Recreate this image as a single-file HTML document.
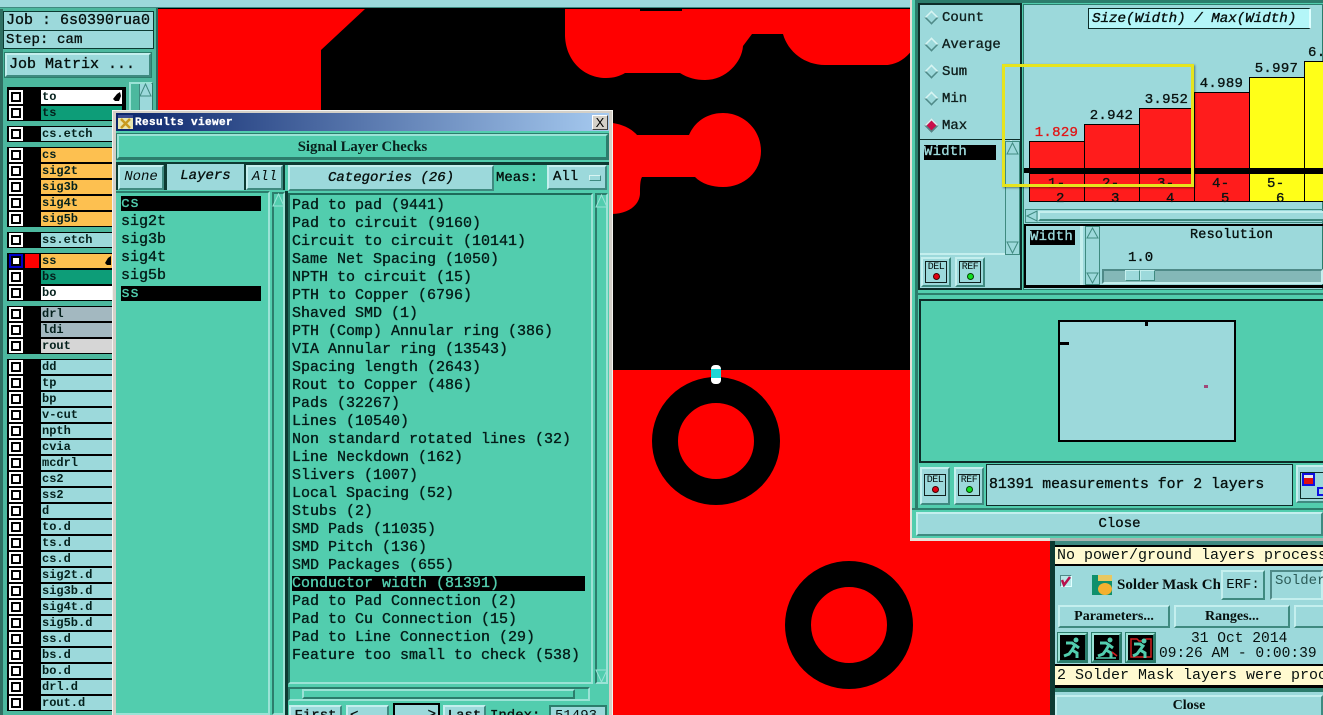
<!DOCTYPE html>
<html><head><meta charset="utf-8"><title>Results viewer</title>
<style>
html,body{margin:0;padding:0;background:#000;}
#r{position:relative;width:1323px;height:715px;overflow:hidden;background:#000;font-family:"Liberation Mono",monospace;color:#06100e;}
#r div{position:absolute;box-sizing:border-box;white-space:pre;-webkit-text-stroke:.35px currentColor;}
.c{background:#9cd9db;}
.t{background:#52cdae;}
.b{background:#9cd9db;border:2px solid;border-color:#c4efee #3f8a80 #3f8a80 #c4efee;text-align:center;}
.bt{background:#52cdae;border:2px solid;border-color:#9be3d6 #2c7d6c #2c7d6c #9be3d6;text-align:center;}
#r .l{font:bold 12px/14px "Liberation Mono",monospace;left:41px;width:81px;height:14px;padding-left:1px;background:#9cd9db;color:#04201c;-webkit-text-stroke:0;}
.k{left:9px;width:14px;height:14px;background:#000;border:2px solid #fff;}
.k:after{content:"";position:absolute;left:2px;top:2px;width:6px;height:6px;background:#fff;box-shadow:inset 0 0 0 0 #000;}
.g{left:7px;width:119px;background:#000;}
.s{font:15px/18px "Liberation Mono",monospace;left:292px;color:#041c18;}
.s2{font:15px/18px "Liberation Mono",monospace;left:121px;color:#041c18;}
.sb{background:#52cdae;border:2px solid;border-color:#2c7d6c #9be3d6 #9be3d6 #2c7d6c;}
.v{font:14px/16px "Liberation Mono",monospace;letter-spacing:.3px;color:#0a1412;text-align:center;}
.bar{background:#ff1c1c;border:1px solid #000;border-bottom:0;}
.cell{border:1px solid #000;background:#ff1c1c;top:173px;height:29px;overflow:hidden;}
.rad{font:14px/16px "Liberation Mono",monospace;left:942px;color:#10201e;}
.dia{left:925px;width:13px;height:13px;transform:rotate(45deg) scale(.78);background:#9cd9db;border:2px solid;border-color:#d8f4f2 #4f8a88 #4f8a88 #d8f4f2;}
#r .sf{font-family:"Liberation Serif",serif;font-weight:bold;-webkit-text-stroke:0;}
#r .th{-webkit-text-stroke:0;}
</style></head><body>
<div id="r">
<!-- canvas -->
<svg style="position:absolute;left:0;top:0" width="1323" height="715" viewBox="0 0 1323 715">
<rect width="1323" height="715" fill="#000"/>
<path fill="#f00" d="M158 9H365L321 50V370H1323V715H158Z"/>
<path fill="#f00" d="M565 9V36C566 62 585 78 606 78C614 78 620 76 625 73H680C688 78 696 80 705 80C726 80 742 62 743 46L752 34H783C788 52 805 65 825 65H885C895 65 905 60 912 50V9Z"/>
<rect x="640" y="9" width="42" height="2" fill="#000"/>
<path fill="#f00" d="M600 122C618 122 630 127 637 135H689C695 121 708 113 723 113C744 113 761 130 761 151C761 172 744 187 723 187C712 187 702 184 695 177H642C640 180 640 188 640 193C640 205 628 214 612 214H600Z"/>
<circle cx="716" cy="441" r="51" fill="none" stroke="#000" stroke-width="26"/>
<circle cx="849" cy="625" r="51" fill="none" stroke="#000" stroke-width="26"/>
<rect x="711" y="365" width="10" height="19" rx="4" fill="#fff"/>
<rect x="711" y="369" width="10" height="9" fill="#1fd6d6"/>
</svg>
<div class="c" style="left:0;top:0;width:912px;height:8px;border-bottom:1px solid #3f8a80"></div>

<!-- left panel -->
<div style="left:0;top:8px;width:158px;height:707px;background:#4cb89e;border-right:2px solid #2c6b5e"></div>
<div style="left:0;top:9px;width:3px;height:706px;background:#2f6f62"></div>
<div class="c" style="left:3px;top:11px;width:151px;height:20px;border:1px solid #0c3a32;font:15px/18px 'Liberation Mono',monospace;padding-left:2px">Job : 6s0390rua0</div>
<div class="c" style="left:3px;top:30px;width:151px;height:19px;border:1px solid #0c3a32;font:14px/18px 'Liberation Mono',monospace;padding-left:2px;letter-spacing:.1px">Step: cam</div>
<div class="b" style="left:5px;top:53px;width:146px;height:24px;font:15px/20px 'Liberation Mono',monospace;text-align:left;padding-left:2px;outline:1px solid #2c7d6c">Job Matrix ...</div>
<div class="bt" style="left:129px;top:82px;width:24px;height:633px;background:#4cb89e"></div>
<div class="c" style="left:139px;top:84px;width:13px;height:631px;border-left:1px solid #3f8a80"></div>
<svg style="position:absolute;left:139px;top:83px" width="13" height="14"><path d="M6.5 1L12 13H1Z" fill="#9cd9db" stroke="#3f8a80"/></svg>

<div class="g" style="top:87px;height:34px"></div>
<div class="g" style="top:126px;height:16px"></div>
<div class="g" style="top:147px;height:80px"></div>
<div class="g" style="top:232px;height:16px"></div>
<div class="g" style="top:253px;height:48px"></div>
<div class="g" style="top:306px;height:48px"></div>
<div class="g" style="top:359px;height:352px"></div>

<div class="k" style="top:90px"></div><div class="l" style="top:90px;background:#fff">to</div>
<svg style="position:absolute;left:112px;top:91px" width="10" height="12"><path d="M1 8L5 3L8 1L9 5L7 10H3Z" fill="#000"/></svg>
<div class="k" style="top:106px"></div><div class="l" style="top:106px;background:#0d9d78">ts</div>
<div class="k" style="top:127px"></div><div class="l" style="top:127px">cs.etch</div>
<div class="k" style="top:148px"></div><div class="l" style="top:148px;background:#fdc050">cs</div>
<div class="k" style="top:164px"></div><div class="l" style="top:164px;background:#fdc050">sig2t</div>
<div class="k" style="top:180px"></div><div class="l" style="top:180px;background:#fdc050">sig3b</div>
<div class="k" style="top:196px"></div><div class="l" style="top:196px;background:#fdc050">sig4t</div>
<div class="k" style="top:212px"></div><div class="l" style="top:212px;background:#fdc050">sig5b</div>
<div class="k" style="top:233px"></div><div class="l" style="top:233px">ss.etch</div>
<div class="k" style="top:254px;border-color:#0000c8"></div><div style="left:25px;top:254px;width:14px;height:14px;background:#f00"></div><div class="l" style="top:254px;background:#fdc050">ss</div>
<svg style="position:absolute;left:104px;top:255px" width="8" height="12"><path d="M1 8L4 3L7 1V10H3Z" fill="#000"/></svg>
<div class="k" style="top:270px"></div><div class="l" style="top:270px;background:#0d9d78">bs</div>
<div class="k" style="top:286px"></div><div class="l" style="top:286px;background:#fff">bo</div>
<div class="k" style="top:307px"></div><div class="l" style="top:307px;background:#a3b8c0">drl</div>
<div class="k" style="top:323px"></div><div class="l" style="top:323px;background:#a3b8c0">ldi</div>
<div class="k" style="top:339px"></div><div class="l" style="top:339px;background:#d6d6d6">rout</div>
<div class="k" style="top:360px"></div><div class="l" style="top:360px">dd</div>
<div class="k" style="top:376px"></div><div class="l" style="top:376px">tp</div>
<div class="k" style="top:392px"></div><div class="l" style="top:392px">bp</div>
<div class="k" style="top:408px"></div><div class="l" style="top:408px">v-cut</div>
<div class="k" style="top:424px"></div><div class="l" style="top:424px">npth</div>
<div class="k" style="top:440px"></div><div class="l" style="top:440px">cvia</div>
<div class="k" style="top:456px"></div><div class="l" style="top:456px">mcdrl</div>
<div class="k" style="top:472px"></div><div class="l" style="top:472px">cs2</div>
<div class="k" style="top:488px"></div><div class="l" style="top:488px">ss2</div>
<div class="k" style="top:504px"></div><div class="l" style="top:504px">d</div>
<div class="k" style="top:520px"></div><div class="l" style="top:520px">to.d</div>
<div class="k" style="top:536px"></div><div class="l" style="top:536px">ts.d</div>
<div class="k" style="top:552px"></div><div class="l" style="top:552px">cs.d</div>
<div class="k" style="top:568px"></div><div class="l" style="top:568px">sig2t.d</div>
<div class="k" style="top:584px"></div><div class="l" style="top:584px">sig3b.d</div>
<div class="k" style="top:600px"></div><div class="l" style="top:600px">sig4t.d</div>
<div class="k" style="top:616px"></div><div class="l" style="top:616px">sig5b.d</div>
<div class="k" style="top:632px"></div><div class="l" style="top:632px">ss.d</div>
<div class="k" style="top:648px"></div><div class="l" style="top:648px">bs.d</div>
<div class="k" style="top:664px"></div><div class="l" style="top:664px">bo.d</div>
<div class="k" style="top:680px"></div><div class="l" style="top:680px">drl.d</div>
<div class="k" style="top:696px"></div><div class="l" style="top:696px">rout.d</div>

<!-- results viewer -->
<div style="left:112px;top:110px;width:501px;height:605px;background:#d4d0c8;border:1px solid #f4f4f0;border-bottom:0"></div>
<div style="left:116px;top:113px;width:493px;height:602px;background:#52cdae"></div>
<div style="left:116px;top:113px;width:493px;height:18px;background:linear-gradient(90deg,#0a246a,#a6caf0)"></div>
<div style="left:118px;top:115px;width:15px;height:14px;background:#e8e6b0;border-top:3px solid #3a4a90"></div>
<svg style="position:absolute;left:119px;top:118px" width="13" height="11"><path d="M2 1L11 10M11 1L2 10" stroke="#c89a20" stroke-width="2.5"/></svg>
<div style="left:135px;top:116px;font:bold 11px/14px 'Liberation Mono',monospace;color:#fff;letter-spacing:.4px">Results viewer</div>
<div class="th" style="left:592px;top:115px;width:16px;height:15px;background:#d4d0c8;border:1px solid;border-color:#fff #404040 #404040 #fff;font:13px/13px 'Liberation Sans',sans-serif;text-align:center;color:#000">X</div>

<div class="bt sf" style="left:117px;top:134px;width:491px;height:25px;font-size:14.7px;line-height:22px;outline:1px solid #2c7d6c;color:#08201c">Signal Layer Checks</div>
<div style="left:116px;top:162px;width:169px;height:28px;background:#0d3a32"></div>
<div style="left:285px;top:162px;width:324px;height:3px;background:#0d3a32"></div>
<div class="b th" style="left:118px;top:165px;width:46px;height:25px;font:italic 14px/21px 'Liberation Mono',monospace">None</div>
<div class="c" style="left:167px;top:164px;width:77px;height:26px;font:italic 14px/25px 'Liberation Mono',monospace;text-align:center">Layers</div>
<div class="b th" style="left:246px;top:165px;width:37px;height:25px;font:italic 14px/21px 'Liberation Mono',monospace">All</div>
<div class="b" style="left:288px;top:165px;width:206px;height:26px;font:italic 14px/23px 'Liberation Mono',monospace">Categories (26)</div>
<div style="left:496px;top:169px;font:14px/18px 'Liberation Mono',monospace">Meas:</div>
<div class="b" style="left:547px;top:165px;width:60px;height:25px;font:14px/21px 'Liberation Mono',monospace;text-align:left;padding-left:4px">All</div>
<div style="left:589px;top:175px;width:12px;height:6px;background:#9cd9db;border:1px solid;border-color:#d8f4f2 #3f8a80 #3f8a80 #d8f4f2"></div>

<!-- layers list -->
<div class="sb" style="left:116px;top:191px;width:154px;height:524px;border-left:0"></div>
<div style="left:121px;top:196px;width:140px;height:15px;background:#000"></div>
<div style="left:121px;top:286px;width:140px;height:15px;background:#000"></div>
<div class="s2" style="top:195px;color:#52cdae">cs</div>
<div class="s2" style="top:213px">sig2t</div>
<div class="s2" style="top:231px">sig3b</div>
<div class="s2" style="top:249px">sig4t</div>
<div class="s2" style="top:267px">sig5b</div>
<div class="s2" style="top:285px;color:#52cdae">ss</div>
<div class="sb" style="left:272px;top:192px;width:13px;height:523px"></div>
<svg style="position:absolute;left:272px;top:192px" width="13" height="16"><path d="M6.5 2L12 14H1Z" fill="#52cdae" stroke="#9be3d6"/></svg>
<div style="left:285px;top:191px;width:3px;height:524px;background:#0d3a32"></div>

<!-- categories list -->
<div class="sb" style="left:288px;top:193px;width:305px;height:491px;border-color:#1e6a5a #9be3d6 #9be3d6 #1e6a5a"></div>
<div style="left:292px;top:576px;width:293px;height:15px;background:#000"></div>
<div class="s" style="top:197px">Pad to pad (9441)</div>
<div class="s" style="top:215px">Pad to circuit (9160)</div>
<div class="s" style="top:233px">Circuit to circuit (10141)</div>
<div class="s" style="top:251px">Same Net Spacing (1050)</div>
<div class="s" style="top:269px">NPTH to circuit (15)</div>
<div class="s" style="top:287px">PTH to Copper (6796)</div>
<div class="s" style="top:305px">Shaved SMD (1)</div>
<div class="s" style="top:323px">PTH (Comp) Annular ring (386)</div>
<div class="s" style="top:341px">VIA Annular ring (13543)</div>
<div class="s" style="top:359px">Spacing length (2643)</div>
<div class="s" style="top:377px">Rout to Copper (486)</div>
<div class="s" style="top:395px">Pads (32267)</div>
<div class="s" style="top:413px">Lines (10540)</div>
<div class="s" style="top:431px">Non standard rotated lines (32)</div>
<div class="s" style="top:449px">Line Neckdown (162)</div>
<div class="s" style="top:467px">Slivers (1007)</div>
<div class="s" style="top:485px">Local Spacing (52)</div>
<div class="s" style="top:503px">Stubs (2)</div>
<div class="s" style="top:521px">SMD Pads (11035)</div>
<div class="s" style="top:539px">SMD Pitch (136)</div>
<div class="s" style="top:557px">SMD Packages (655)</div>
<div class="s" style="top:575px;color:#52cdae">Conductor width (81391)</div>
<div class="s" style="top:593px">Pad to Pad Connection (2)</div>
<div class="s" style="top:611px">Pad to Cu Connection (15)</div>
<div class="s" style="top:629px">Pad to Line Connection (29)</div>
<div class="s" style="top:647px">Feature too small to check (538)</div>
<div class="sb" style="left:595px;top:193px;width:13px;height:491px"></div>
<svg style="position:absolute;left:595px;top:193px" width="13" height="16"><path d="M6.5 2L12 14H1Z" fill="#52cdae" stroke="#9be3d6"/></svg>
<svg style="position:absolute;left:595px;top:668px" width="13" height="16"><path d="M6.5 14L12 2H1Z" fill="#52cdae" stroke="#9be3d6"/></svg>
<div class="sb" style="left:288px;top:687px;width:302px;height:14px"></div>
<div class="bt" style="left:302px;top:689px;width:273px;height:10px"></div>
<div class="b" style="left:289px;top:705px;width:53px;height:24px;font:14px/19px 'Liberation Mono',monospace">First</div>
<div class="b" style="left:346px;top:705px;width:43px;height:24px;font:14px/19px 'Liberation Mono',monospace;text-align:left;padding-left:2px">&lt;</div>
<div class="b" style="left:393px;top:703px;width:47px;height:26px;border:2px solid #000;font:14px/21px 'Liberation Mono',monospace;text-align:right;padding-right:2px">&gt;</div>
<div class="b" style="left:443px;top:705px;width:43px;height:24px;font:14px/19px 'Liberation Mono',monospace">Last</div>
<div style="left:490px;top:707px;font:14px/18px 'Liberation Mono',monospace">Index:</div>
<div class="c th" style="left:549px;top:705px;width:58px;height:24px;border:2px solid #2c7d6c;font:14px/18px 'Liberation Mono',monospace;padding-left:4px">51493</div>

<!-- right panel -->
<div style="left:910px;top:0;width:413px;height:541px;background:#e8e0d8"></div>
<div style="left:912px;top:0;width:411px;height:538px;background:#52cdae"></div>
<div style="left:915px;top:0;width:408px;height:3px;background:#2c7d6c"></div>
<div style="left:915px;top:3px;width:3px;height:505px;background:#2c7d6c"></div>
<div class="c" style="left:918px;top:3px;width:104px;height:287px;border:2px solid #0d2c28"></div>
<div class="dia" style="top:11px"></div><div class="rad" style="top:10px">Count</div>
<div class="dia" style="top:38px"></div><div class="rad" style="top:37px">Average</div>
<div class="dia" style="top:65px"></div><div class="rad" style="top:64px">Sum</div>
<div class="dia" style="top:92px"></div><div class="rad" style="top:91px">Min</div>
<div class="dia" style="top:119px;background:#c8104c"></div><div class="rad" style="top:118px">Max</div>
<div style="left:919px;top:139px;width:102px;height:1px;background:#0d2c28"></div>
<div style="left:924px;top:145px;width:72px;height:15px;background:#000;color:#9cd9db;font:14px/15px 'Liberation Mono',monospace;letter-spacing:.2px">Width</div>
<div style="left:920px;top:140px;width:92px;height:115px;border-right:2px solid #c4efee;border-bottom:2px solid #c4efee"></div>
<div class="c" style="left:1005px;top:141px;width:15px;height:114px;border:1px solid #3f8a80"></div>
<svg style="position:absolute;left:1005px;top:141px" width="15" height="15"><path d="M7.5 2L13 13H2Z" fill="#9cd9db" stroke="#3f8a80"/></svg>
<svg style="position:absolute;left:1005px;top:240px" width="15" height="15"><path d="M7.5 13L13 2H2Z" fill="#9cd9db" stroke="#3f8a80"/></svg>
<div class="b" style="left:921px;top:257px;width:30px;height:30px"></div>
<div class="b" style="left:955px;top:257px;width:30px;height:30px"></div>
<div class="th" style="left:925px;top:261px;width:22px;height:22px;border:1px solid #10201e;font:10px/11px 'Liberation Mono',monospace;text-align:center;letter-spacing:-.5px">DEL</div>
<div class="th" style="left:959px;top:261px;width:22px;height:22px;border:1px solid #10201e;font:10px/11px 'Liberation Mono',monospace;text-align:center;letter-spacing:-.5px">REF</div>
<div style="left:933px;top:273px;width:7px;height:7px;border-radius:50%;background:#e00010;border:1px solid #400"></div>
<div style="left:967px;top:273px;width:7px;height:7px;border-radius:50%;background:#10e020;border:1px solid #040"></div>

<!-- chart -->
<div class="c" style="left:1023px;top:4px;width:300px;height:286px;border:1px solid #2c7d6c"></div>
<div style="left:1088px;top:8px;width:223px;height:21px;background:#b4f6f8;border:1px solid #0d2c28;border-right:2px solid #dff;font:italic 14.2px/20px 'Liberation Mono',monospace;padding-left:3px">Size(Width) / Max(Width)</div>
<div class="v" style="left:1029px;top:125px;width:55px;color:#e01818">1.829</div>
<div class="v" style="left:1084px;top:108px;width:55px">2.942</div>
<div class="v" style="left:1139px;top:92px;width:55px">3.952</div>
<div class="v" style="left:1194px;top:76px;width:55px">4.989</div>
<div class="v" style="left:1249px;top:61px;width:55px">5.997</div>
<div class="v" style="left:1308px;top:45px;width:30px;text-align:left">6.</div>
<div class="bar" style="left:1029px;top:141px;width:56px;height:27px"></div>
<div class="bar" style="left:1084px;top:124px;width:56px;height:44px"></div>
<div class="bar" style="left:1139px;top:108px;width:56px;height:60px"></div>
<div class="bar" style="left:1194px;top:92px;width:56px;height:76px"></div>
<div class="bar" style="left:1249px;top:77px;width:56px;height:91px;background:#ffff18"></div>
<div class="bar" style="left:1304px;top:61px;width:30px;height:107px;background:#ffff18"></div>
<div style="left:1024px;top:168px;width:299px;height:5px;background:#000"></div>
<div class="cell" style="left:1029px;width:56px"></div>
<div class="cell" style="left:1084px;width:56px"></div>
<div class="cell" style="left:1139px;width:56px"></div>
<div class="cell" style="left:1194px;width:56px"></div>
<div class="cell" style="left:1249px;width:56px;background:#ffff18"></div>
<div class="cell" style="left:1304px;width:30px;background:#ffff18"></div>
<div class="v" style="left:1048px;top:176px;text-align:left">1-</div><div class="v" style="left:1056px;top:191px;text-align:left">2</div>
<div class="v" style="left:1102px;top:176px;text-align:left">2-</div><div class="v" style="left:1111px;top:191px;text-align:left">3</div>
<div class="v" style="left:1157px;top:176px;text-align:left">3-</div><div class="v" style="left:1166px;top:191px;text-align:left">4</div>
<div class="v" style="left:1212px;top:176px;text-align:left">4-</div><div class="v" style="left:1221px;top:191px;text-align:left">5</div>
<div class="v" style="left:1267px;top:176px;text-align:left">5-</div><div class="v" style="left:1276px;top:191px;text-align:left">6</div>
<div class="c" style="left:1025px;top:209px;width:298px;height:14px;border:1px solid #3f8a80"></div>
<div class="b" style="left:1038px;top:211px;width:372px;height:10px"></div>
<svg style="position:absolute;left:1025px;top:209px" width="14" height="14"><path d="M2 7L12 2V12Z" fill="#9cd9db" stroke="#3f8a80"/></svg>
<div style="left:1024px;top:224px;width:299px;height:2px;background:#000"></div>
<div style="left:1024px;top:285px;width:299px;height:3px;background:#000"></div>
<div style="left:1024px;top:224px;width:2px;height:64px;background:#000"></div>
<div style="left:1030px;top:230px;width:45px;height:15px;background:#000;color:#9cd9db;font:14px/15px 'Liberation Mono',monospace;letter-spacing:.2px">Width</div>
<div style="left:1080px;top:226px;width:3px;height:59px;background:#c4efee"></div>
<div class="c" style="left:1085px;top:226px;width:15px;height:59px;border:1px solid #3f8a80"></div>
<svg style="position:absolute;left:1085px;top:226px" width="15" height="14"><path d="M7.5 2L13 12H2Z" fill="#9cd9db" stroke="#3f8a80"/></svg>
<svg style="position:absolute;left:1085px;top:271px" width="15" height="14"><path d="M7.5 12L13 2H2Z" fill="#9cd9db" stroke="#3f8a80"/></svg>
<div style="left:1190px;top:228px;font:13.5px/16px 'Liberation Mono',monospace;letter-spacing:.2px">Resolution</div>
<div style="left:1128px;top:250px;font:14px/16px 'Liberation Mono',monospace">1.0</div>
<div style="left:1102px;top:269px;width:221px;height:15px;background:#84b8b8;border:2px solid;border-color:#4f8a88 #c4efee #c4efee #4f8a88"></div>
<div class="b" style="left:1125px;top:270px;width:15px;height:11px;border-width:1px"></div>
<div class="b" style="left:1140px;top:270px;width:15px;height:11px;border-width:1px"></div>

<!-- preview -->
<div style="left:915px;top:293px;width:408px;height:2px;background:#2c7d6c"></div>
<div style="left:919px;top:299px;width:404px;height:164px;border:2px solid #0d2c28;border-right:0;background:#52cdae"></div>
<div class="c" style="left:1058px;top:320px;width:178px;height:122px;border:2px solid #000"></div>
<div style="left:1145px;top:322px;width:3px;height:4px;background:#000"></div>
<div style="left:1060px;top:342px;width:9px;height:3px;background:#000"></div>
<div style="left:1204px;top:385px;width:4px;height:3px;background:#a04878"></div>
<div class="b" style="left:920px;top:467px;width:30px;height:38px"></div>
<div class="b" style="left:954px;top:467px;width:30px;height:38px"></div>
<div class="th" style="left:924px;top:474px;width:22px;height:22px;border:1px solid #10201e;font:10px/11px 'Liberation Mono',monospace;text-align:center;letter-spacing:-.5px">DEL</div>
<div class="th" style="left:958px;top:474px;width:22px;height:22px;border:1px solid #10201e;font:10px/11px 'Liberation Mono',monospace;text-align:center;letter-spacing:-.5px">REF</div>
<div style="left:932px;top:486px;width:7px;height:7px;border-radius:50%;background:#e00010;border:1px solid #400"></div>
<div style="left:966px;top:486px;width:7px;height:7px;border-radius:50%;background:#10e020;border:1px solid #040"></div>
<div class="c" style="left:986px;top:464px;width:307px;height:42px;border:1px solid #0d2c28;font:14.8px/40px 'Liberation Mono',monospace;padding-left:2px">81391 measurements for 2 layers</div>
<div class="b" style="left:1296px;top:465px;width:40px;height:38px"></div>
<div style="left:1300px;top:472px;width:30px;height:27px;border:1px solid #0d2c28"></div>
<div style="left:1302px;top:473px;width:13px;height:13px;border:2px solid #1010e0;background:#e8e8e8"></div>
<div style="left:1304px;top:478px;width:9px;height:6px;background:#e01010"></div>
<div style="left:1317px;top:487px;width:10px;height:9px;border:2px solid #1010e0"></div>
<div style="left:912px;top:508px;width:411px;height:2px;background:#2c7d6c"></div>
<div class="b" style="left:916px;top:512px;width:407px;height:24px;font:14px/20px 'Liberation Mono',monospace">Close</div>

<!-- bottom right panel -->
<div class="c" style="left:1050px;top:541px;width:273px;height:174px"></div>
<div style="left:1050px;top:538px;width:273px;height:3px;background:#aab4b0"></div>
<div style="left:1050px;top:541px;width:5px;height:174px;background:#0d3a32"></div>
<div style="left:1055px;top:541px;width:268px;height:4px;background:#3f8a80"></div>
<div class="th" style="left:1055px;top:545px;width:268px;height:21px;background:#fffad0;border:2px solid #000;border-left:0;border-right:0;font:15px/18px 'Liberation Mono',monospace;padding-left:2px">No power/ground layers process</div>
<div style="left:1060px;top:575px;width:12px;height:12px;background:#b8e8e8;border:1px solid;border-color:#4f8a88 #e0ffff #e0ffff #4f8a88"></div>
<svg style="position:absolute;left:1060px;top:575px" width="12" height="12"><path d="M2 5L4 10L10 2" fill="none" stroke="#b8104c" stroke-width="2.5"/></svg>
<div style="left:1092px;top:575px;width:20px;height:20px;background:#10906c"></div>
<div style="left:1098px;top:575px;width:14px;height:6px;background:#e8c860"></div>
<div style="left:1098px;top:583px;width:14px;height:12px;background:#f4b030;border-radius:50%"></div>
<div class="sf" style="left:1117px;top:576px;width:103px;height:18px;overflow:hidden;font-size:15px;line-height:18px">Solder Mask Check</div>
<div class="b th" style="left:1221px;top:570px;width:44px;height:30px;font:14px/27px 'Liberation Mono',monospace">ERF:</div>
<div class="c th" style="left:1270px;top:570px;width:53px;height:30px;border:2px solid;border-color:#4f8a88 #c4efee #c4efee #4f8a88;font:14px/18px 'Liberation Mono',monospace;padding-left:3px;color:#2c5c58">Solder</div>
<div class="b sf" style="left:1058px;top:605px;width:112px;height:23px;font-size:14px;line-height:19px">Parameters...</div>
<div class="b sf" style="left:1174px;top:605px;width:116px;height:23px;font-size:14px;line-height:19px">Ranges...</div>
<div class="b" style="left:1294px;top:605px;width:40px;height:23px"></div>
<div class="bt" style="left:1058px;top:633px;width:29px;height:29px;background:#000;outline:1px solid #2c7d6c"></div>
<div class="bt" style="left:1092px;top:633px;width:29px;height:29px;background:#000;outline:1px solid #2c7d6c"></div>
<div class="bt" style="left:1126px;top:633px;width:29px;height:29px;background:#000;outline:1px solid #2c7d6c"></div>
<svg style="position:absolute;left:1058px;top:633px" width="100" height="29" fill="none" stroke="#52cdae" stroke-width="3">
<g><circle cx="18" cy="7" r="2.5" fill="#52cdae" stroke="none"/><path d="M8 10L14 10L17 12L14 17L19 20L19 25M14 17L11 21L6 23M17 12L21 15"/></g>
<g transform="translate(34 0)"><circle cx="18" cy="7" r="2.5" fill="#52cdae" stroke="none"/><path d="M8 10L14 10L17 12L14 17L19 20L19 25M14 17L11 21L6 23M17 12L21 15"/><path d="M4 25H24" stroke-width="1.5"/><path d="M20 19L25 23" stroke="#d02020" stroke-width="1.5"/></g>
<g transform="translate(68 0)"><path d="M5 6H11L13 8H18L20 6H25V24H5Z" stroke="#d02020" stroke-width="1.5"/><circle cx="18" cy="8" r="2.5" fill="#52cdae" stroke="none"/><path d="M8 11L14 11L17 13L14 17L19 20L19 25M14 17L11 21L7 23"/></g>
</svg>
<div class="th" style="left:1191px;top:631px;font:14.6px/16px 'Liberation Mono',monospace">31 Oct 2014</div>
<div class="th" style="left:1159px;top:646px;font:14.6px/16px 'Liberation Mono',monospace">09:26 AM - 0:00:39</div>
<div class="th" style="left:1055px;top:664px;width:268px;height:24px;background:#fffad0;border-top:2px solid #000;border-bottom:3px solid #000;font:15px/19px 'Liberation Mono',monospace;padding-left:2px">2 Solder Mask layers were proc</div>
<div style="left:1055px;top:688px;width:268px;height:4px;background:#2c7d6c"></div>
<div class="b sf" style="left:1055px;top:695px;width:268px;height:20px;font-size:14px;line-height:18px;border-bottom:0">Close</div>

<!-- yellow highlight -->
<div style="left:1002px;top:64px;width:192px;height:123px;border:3px solid #e6e41e;box-shadow:1px 1px 2px rgba(0,0,0,.45)"></div>
</div>
</body></html>
